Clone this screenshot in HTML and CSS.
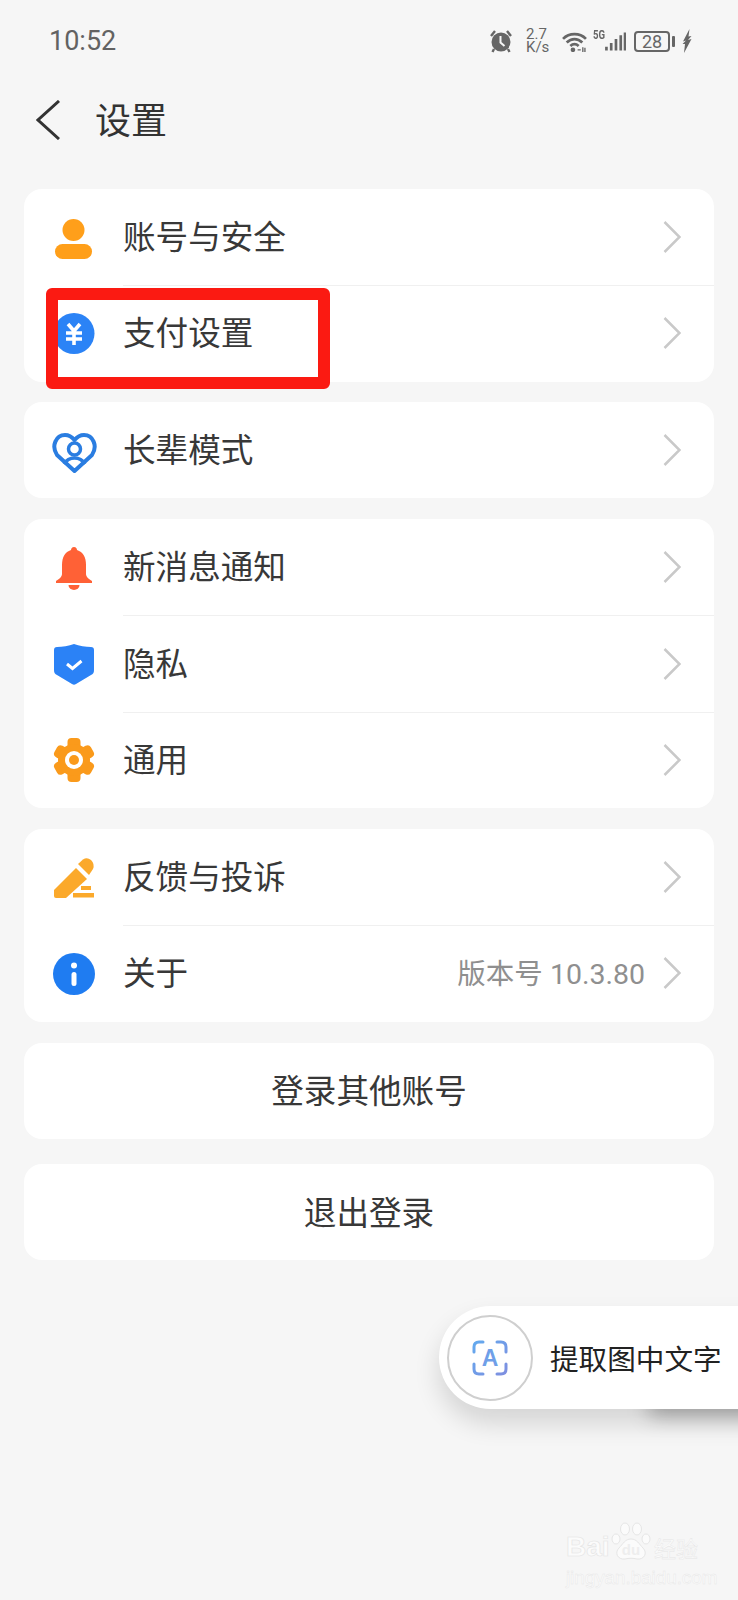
FILE: index.html
```html
<!DOCTYPE html>
<html lang="zh-CN">
<head>
<meta charset="utf-8">
<title>设置</title>
<link rel="stylesheet" href="styles.css">
</head>
<body>
<div class="page">
  <div class="status">
    <span class="time">10:52</span>
    <div class="status-icons">
      <svg class="s-alarm" viewBox="0 0 24 24"><path d="M2 7 6 2M22 7 18 2" stroke="#666" stroke-width="2.4" fill="none"/><path d="M5 20 3.5 23M19 20 20.5 23" stroke="#666" stroke-width="2.4"/><circle cx="12" cy="13" r="9.5" fill="#666"/><path d="M11.5 7V13.5L15.5 17" stroke="#f6f6f6" stroke-width="2" fill="none"/></svg>
      <div class="speed">2.7<br>K/s</div>
      <svg class="s-wifi" viewBox="0 0 24 20"><path d="M1 7.5C7 1.5 17 1.5 23 7.5M4.5 11C9 6.5 15 6.5 19.5 11M8 14.3C10.5 12 13.5 12 16 14.3" fill="none" stroke="#666" stroke-width="2.6"/><circle cx="10.5" cy="18" r="2.2" fill="#666"/><path d="M15 18H18M20 15.5V20M22 16V20" stroke="#666" stroke-width="1.3"/></svg>
      <div class="net"><span class="g5">5G</span><svg class="s-signal" viewBox="0 0 22 19"><path d="M1.5 15V19M6.5 11V19M11.5 7V19M16.5 3V19M21 0V19" stroke="#666" stroke-width="2.8"/></svg></div>
      <div class="battery"><span class="batt-body">28</span><span class="batt-tip"></span></div>
      <svg class="s-bolt" viewBox="0 0 10 24"><path d="M7.500 0 1 12.500 4 11.500 .5 15 3 15 2 24 9.500 10 6 11 9.500 7 6.500 7.500Z" fill="#666"/></svg>
    </div>
  </div>

  <header class="nav">
    <svg class="back" viewBox="0 0 24 40"><path d="M23 1 2 20 23 39" fill="none" stroke="#333" stroke-width="3"/></svg>
    <h1 class="title">设置</h1>
  </header>

  <section class="card">
    <div class="row">
      <svg class="icon" viewBox="0 0 48 48"><circle cx="23.500" cy="17" r="11" fill="#ff9f1a"/><rect x="5" y="31" width="37" height="15" rx="7.500" fill="#ff9f1a"/></svg>
      <span class="label">账号与安全</span>
      <svg class="chev" viewBox="0 0 18 32"><path d="M1.500 1 16.500 16 1.500 31" fill="none" stroke="#c9c9c9" stroke-width="2.500"/></svg>
    </div>
    <div class="row">
      <svg class="icon" viewBox="0 0 48 48"><circle cx="24" cy="24.500" r="20.500" fill="#2b83f6"/><path d="M18 15 24 22 30 15M16 24H32M16 30H32M24 22V36" fill="none" stroke="#fff" stroke-width="3.600"/></svg>
      <span class="label">支付设置</span>
      <svg class="chev" viewBox="0 0 18 32"><path d="M1.500 1 16.500 16 1.500 31" fill="none" stroke="#c9c9c9" stroke-width="2.500"/></svg>
    </div>
  </section>

  <section class="card">
    <div class="row">
      <svg class="icon" viewBox="0 0 48 48"><path d="M24.500 45 7 29C1 20 6 9 15 9 19 9 22 11 24.500 14 27 11 30 9 34 9 43 9 48 20 42 29Z" fill="none" stroke="#2a7de1" stroke-width="4" stroke-linejoin="round"/><circle cx="24.500" cy="23" r="6" fill="none" stroke="#2a7de1" stroke-width="3.500"/><path d="M14 38C17 33 21 32 24.500 32 28 32 32 33 35 38" fill="none" stroke="#2a7de1" stroke-width="3.500"/></svg>
      <span class="label">长辈模式</span>
      <svg class="chev" viewBox="0 0 18 32"><path d="M1.500 1 16.500 16 1.500 31" fill="none" stroke="#c9c9c9" stroke-width="2.500"/></svg>
    </div>
  </section>

  <section class="card">
    <div class="row">
      <svg class="icon" viewBox="0 0 48 48"><path d="M24 4C26 4 27 5.500 27 7 33 9 36 14 36 22V31C36 34 39 36 42 38V40H6V38C9 36 12 34 12 31V22C12 14 15 9 21 7 21 5.500 22 4 24 4Z" fill="#ff6136"/><path d="M18.500 42H29.500A5.500 5 0 0 1 18.500 42Z" fill="#ff6136"/></svg>
      <span class="label">新消息通知</span>
      <svg class="chev" viewBox="0 0 18 32"><path d="M1.500 1 16.500 16 1.500 31" fill="none" stroke="#c9c9c9" stroke-width="2.500"/></svg>
    </div>
    <div class="row">
      <svg class="icon" viewBox="0 0 48 48"><path d="M24 4C29 6 36 7 41 7 43 7 44 8 44 10V30C44 33 43 34 41 35L26 44C24.500 45 23.500 45 22 44L7 35C5 34 4 33 4 30V10C4 8 5 7 7 7 12 7 19 6 24 4Z" fill="#2b82f6"/><path d="M17 24 22.500 28.500 31.500 21" fill="none" stroke="#fff" stroke-width="3"/></svg>
      <span class="label">隐私</span>
      <svg class="chev" viewBox="0 0 18 32"><path d="M1.500 1 16.500 16 1.500 31" fill="none" stroke="#c9c9c9" stroke-width="2.500"/></svg>
    </div>
    <div class="row">
      <svg class="icon" viewBox="0 0 48 48"><g fill="#fa9a1b"><rect x="17.500" y="2" width="13" height="44" rx="4"/><rect x="17.500" y="3" width="13" height="42" rx="4" transform="rotate(60 24 24)"/><rect x="17.500" y="3" width="13" height="42" rx="4" transform="rotate(120 24 24)"/><circle cx="24" cy="24" r="16"/></g><circle cx="24" cy="24" r="9" fill="#fff"/><circle cx="24" cy="24" r="5" fill="#fa9a1b"/></svg>
      <span class="label">通用</span>
      <svg class="chev" viewBox="0 0 18 32"><path d="M1.500 1 16.500 16 1.500 31" fill="none" stroke="#c9c9c9" stroke-width="2.500"/></svg>
    </div>
  </section>

  <section class="card">
    <div class="row">
      <svg class="icon" viewBox="0 0 48 48"><g fill="#fba92b"><path d="M4 37 26 15 37 26 16 45H6Q4 45 4 43Z"/><path d="M28 11 33 6.500Q37 4 41 7 45 11 43 16L39 22Z"/><rect x="31" y="33" width="10" height="4"/><rect x="23" y="40" width="21" height="4.500"/></g></svg>
      <span class="label">反馈与投诉</span>
      <svg class="chev" viewBox="0 0 18 32"><path d="M1.500 1 16.500 16 1.500 31" fill="none" stroke="#c9c9c9" stroke-width="2.500"/></svg>
    </div>
    <div class="row">
      <svg class="icon" viewBox="0 0 48 48"><circle cx="24" cy="25" r="21" fill="#1f7cf1"/><circle cx="24" cy="16.500" r="3" fill="#fff"/><rect x="21.500" y="23" width="5" height="14" rx="2.500" fill="#fff"/></svg>
      <span class="label">关于</span>
      <span class="version">版本号 10.3.80</span>
      <svg class="chev" viewBox="0 0 18 32"><path d="M1.500 1 16.500 16 1.500 31" fill="none" stroke="#c9c9c9" stroke-width="2.500"/></svg>
    </div>
  </section>

  <section class="card action">登录其他账号</section>
  <section class="card action logout">退出登录</section>

  <div class="highlight"></div>

  <div class="ocr-pill">
    <div class="ocr-circle">
      <svg class="ocr-icon" viewBox="0 0 36 36">
        <defs><linearGradient id="ocrGrad" x1="0" y1="0" x2="1" y2="1"><stop offset="0" stop-color="#63a9ee"/><stop offset="1" stop-color="#7e8fe0"/></linearGradient></defs>
        <path d="M2 12V7Q2 2 7 2H11M25 2H29Q34 2 34 7V12M34 24V29Q34 34 29 34H25M11 34H7Q2 34 2 29V24" fill="none" stroke="url(#ocrGrad)" stroke-width="3" stroke-linecap="round"/>
        <text x="18" y="26" class="ocr-a">A</text>
      </svg>
    </div>
    <span class="ocr-text">提取图中文字</span>
  </div>

  <div class="watermark">
    <div class="wm-top">
      <span class="wm-bai">Bai</span>
      <svg class="wm-paw" viewBox="0 0 40 40"><g fill="#fbfbfb" stroke="#e6e6e6"><ellipse cx="5" cy="17" rx="4" ry="5"/><ellipse cx="14" cy="7" rx="4.500" ry="6"/><ellipse cx="26" cy="7" rx="4.500" ry="6"/><ellipse cx="35" cy="17" rx="4" ry="5"/><path d="M20 17C26 17 28 22 32 26 37 31 33 38 26 37 22 36 18 36 14 37 7 38 3 31 8 26 12 22 14 17 20 17Z"/></g><text x="20" y="33" class="wm-du">du</text></svg>
      <span class="wm-cn">经验</span>
    </div>
    <div class="wm-url">jingyan.baidu.com</div>
  </div>
</div>
</body>
</html>
```

FILE: styles.css
```css
* { box-sizing: border-box; }
html, body { margin: 0; padding: 0; }
body {
  background: #f6f6f6;
  font-family: "Noto Sans CJK SC", "Noto Sans", sans-serif;
  color: #333;
}
.page {
  position: relative;
  width: 738px;
  height: 1600px;
  overflow: hidden;
  padding: 0 24px;
}

/* status bar */
.status {
  height: 82px;
  margin: 0 -24px;
  padding: 0 46px 0 49px;
  display: flex;
  align-items: center;
  justify-content: space-between;
}
.time {
  font-family: Roboto, sans-serif;
  font-size: 27px;
  color: #626262;
}
.status-icons {
  display: flex;
  align-items: center;
  color: #666;
  font-family: Roboto, sans-serif;
}
.s-alarm { width: 24px; height: 24px; margin-right: 13px; }
.speed {
  font-size: 15px;
  line-height: 13px;
  width: 24px;
  margin-right: 12px;
}
.s-wifi { width: 25px; height: 21px; margin-right: 6px; }
.net { display: flex; align-items: flex-start; margin-right: 8px; height: 22px; }
.g5 { font-size: 12px; line-height: 10px; font-weight: 700; width: 12px; transform: scaleX(.8); transform-origin: left; }
.s-signal { width: 21px; height: 19px; margin-top: 2px; }
.battery { display: flex; align-items: center; margin-right: 7px; }
.batt-body {
  width: 36px;
  height: 21px;
  border: 2px solid #666;
  border-radius: 4px;
  font-size: 18px;
  line-height: 17px;
  text-align: center;
}
.batt-tip { width: 3px; height: 11px; margin-left: 2px; background: #666; border-radius: 1px; }
.s-bolt { width: 10px; height: 24px; }

/* nav */
.nav {
  height: 107px;
  display: flex;
  align-items: flex-start;
  margin: 0 -24px;
  padding: 18px 0 0 36px;
}
.back { width: 24px; height: 40px; }
.title {
  margin: -7px 0 0 35px;
  font-size: 36px;
  font-weight: 400;
  line-height: 50px;
  color: #333;
}

/* cards */
.card {
  background: #fff;
  border-radius: 18px;
  margin-bottom: 20.9px;
  overflow: hidden;
}
.row {
  height: 96px;
  display: flex;
  align-items: center;
  padding: 0 33px 0 26px;
  position: relative;
}
.row + .row { height: 96.5px; }
.row + .row::before {
  content: "";
  position: absolute;
  top: 0;
  left: 99px;
  right: 0;
  height: 1px;
  background: #f0f0f0;
}
.icon { width: 48px; height: 48px; flex: none; }
.label {
  margin: 0 0 4px 25px;
  font-size: 32.6px;
  line-height: 44px;
  color: #383838;
  flex: 1;
}
.version {
  font-family: Roboto, "Noto Sans CJK SC", sans-serif;
  font-size: 28.5px;
  color: #8f8f8f;
  margin: 0 18px 4px 0;
}
.chev { width: 18px; height: 32px; flex: none; }

.action {
  height: 96px;
  font-size: 32.6px;
  color: #383838;
  display: flex;
  align-items: center;
  justify-content: center;
  padding-bottom: 4px;
  margin-bottom: 25.5px;
}

/* overlays */
.highlight {
  position: absolute;
  left: 46px;
  top: 288px;
  width: 284px;
  height: 101px;
  border: 12px solid #fb1a12;
  border-radius: 6px;
}
.ocr-pill {
  position: absolute;
  left: 439px;
  top: 1306px;
  width: 420px;
  height: 103px;
  background: #fff;
  border-radius: 52px;
  display: flex;
  align-items: center;
  padding-left: 8px;
  box-shadow: 0 14px 26px rgba(0, 0, 0, .14);
}
.ocr-pill::after {
  content: "";
  position: absolute;
  left: 210px;
  top: 72px;
  width: 130px;
  height: 38px;
  background: rgba(0, 0, 0, .28);
  filter: blur(10px);
  z-index: -1;
}
.ocr-circle {
  width: 86px;
  height: 86px;
  border: 2px solid #cfcfcf;
  border-radius: 50%;
  display: flex;
  align-items: center;
  justify-content: center;
}
.ocr-icon { width: 36px; height: 36px; }
.ocr-a { font-family: "Liberation Sans", sans-serif; font-size: 23px; font-weight: 700; fill: #6f9fe8; text-anchor: middle; }
.ocr-text { margin-left: 17px; font-size: 28.6px; color: #222; }

.watermark {
  position: absolute;
  left: 566px;
  top: 1520px;
  width: 140px;
  color: #fbfbfb;
  font-family: "Liberation Sans", sans-serif;
}
.wm-top { display: flex; align-items: flex-end; height: 42px; }
.wm-bai { font-size: 28px; font-weight: 700; line-height: 30px; -webkit-text-stroke: .6px #e4e4e4; width: 45px; }
.wm-paw { width: 40px; height: 40px; }
.wm-du { font-family: "Liberation Sans", sans-serif; font-size: 15px; font-weight: 700; fill: #eee; text-anchor: middle; }
.wm-cn { font-family: "Noto Sans CJK SC", sans-serif; font-size: 22px; line-height: 30px; margin-left: 3px; -webkit-text-stroke: .4px #e4e4e4; }
.wm-url { font-size: 19px; line-height: 22px; margin-top: 5px; -webkit-text-stroke: .4px #e6e6e6; white-space: nowrap; letter-spacing: -.1px; }
```
